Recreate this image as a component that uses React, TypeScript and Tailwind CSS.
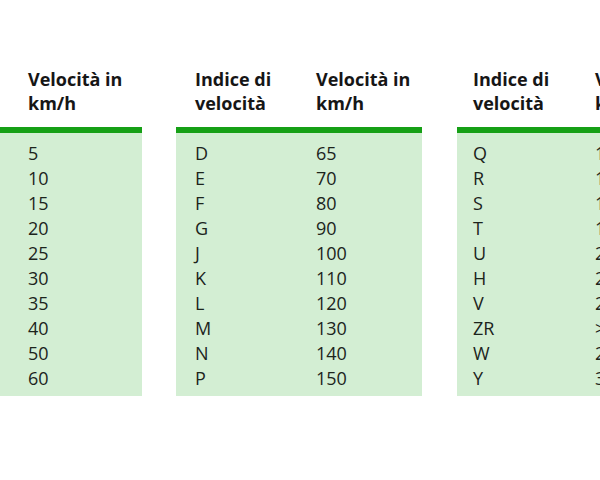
import React from "react";

type Table = {
  rows: [string, string][];
  ml: string;
  c1: string;
  c2: string;
};

const t1: [string, string][] = [
  ["A1", "5"],
  ["A2", "10"],
  ["A3", "15"],
  ["A4", "20"],
  ["A5", "25"],
  ["A6", "30"],
  ["A7", "35"],
  ["A8", "40"],
  ["B", "50"],
  ["C", "60"],
];
const t2: [string, string][] = [
  ["D", "65"],
  ["E", "70"],
  ["F", "80"],
  ["G", "90"],
  ["J", "100"],
  ["K", "110"],
  ["L", "120"],
  ["M", "130"],
  ["N", "140"],
  ["P", "150"],
];
const t3: [string, string][] = [
  ["Q", "160"],
  ["R", "170"],
  ["S", "180"],
  ["T", "190"],
  ["U", "200"],
  ["H", "210"],
  ["V", "240"],
  ["ZR", "> 240"],
  ["W", "270"],
  ["Y", "300"],
];

function SpeedTable({
  rows,
  className,
  c1,
  c2,
}: {
  rows: [string, string][];
  className: string;
  c1: string;
  c2: string;
}) {
  return (
    <div className={"shrink-0 w-[246px] flex flex-col " + className}>
      <div className="flex pb-[12px] font-bold text-[#161616] leading-[24px]">
        <div className={c1}>
          Indice di
          <br />
          velocità
        </div>
        <div className={c2}>
          Velocità in
          <br />
          km/h
        </div>
      </div>
      <div className="h-[6px] bg-[#16a016]" />
      <div className="bg-[#d3eed3] pt-[8px] pb-[5px] text-[#1c241c] leading-[25px]">
        {rows.map(([a, b]) => (
          <div key={a} className="flex">
            <div className={c1}>{a}</div>
            <div className={c2}>{b}</div>
          </div>
        ))}
      </div>
    </div>
  );
}

export default function App() {
  return (
    <div
      className="w-[600px] h-[480px] overflow-hidden bg-white relative text-[18px]"
      style={{ fontFamily: '"Open Sans", "Noto Sans", sans-serif' }}
    >
      <div className="flex mt-[67px] ml-[-104px]">
        <SpeedTable rows={t1} className="" c1="w-[132px] pl-[19px]" c2="flex-1" />
        <SpeedTable rows={t2} className="ml-[34px]" c1="w-[140px] pl-[19px]" c2="flex-1" />
        <SpeedTable rows={t3} className="ml-[35px]" c1="w-[138px] pl-[16px]" c2="flex-1" />
      </div>
    </div>
  );
}
